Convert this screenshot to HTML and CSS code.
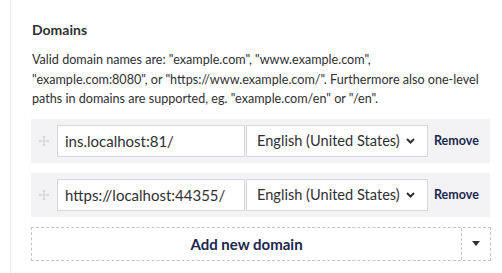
FILE: index.html
```html
<!DOCTYPE html>
<html lang="en">
<head>
  <meta charset="UTF-8">
  <meta name="viewport" content="width=device-width, initial-scale=1.0">
  <title>Domains</title>
  <link rel="stylesheet" href="styles.css">
</head>
<body>
  <div class="panel">
    <h3 class="panel-title">Domains</h3>
    <p class="panel-desc">Valid domain names are: "example.com", "www.example.com",<br>"example.com:8080", or "https://www.example.com/". Furthermore also one-level<br>paths in domains are supported, eg. "example.com/en" or "/en".</p>

    <div class="domain-list">
      <div class="domain-row">
        <span class="drag-handle">
          <svg width="12" height="12" viewBox="0 0 12 12"><path d="M6 0.5 L7.8 2.5 H6.6 V5.4 H9.5 V4.2 L11.5 6 L9.5 7.8 V6.6 H6.6 V9.5 H7.8 L6 11.5 L4.2 9.5 H5.4 V6.6 H2.5 V7.8 L0.5 6 L2.5 4.2 V5.4 H5.4 V2.5 H4.2 Z" fill="#d3d3d6"/></svg>
        </span>
        <input class="domain-input" type="text" value="ins.localhost:81/">
        <div class="lang-select">
          <span>English (United States)</span>
          <svg class="chevron" width="9" height="6" viewBox="0 0 9 6"><path d="M1 1 L4.5 4.5 L8 1" fill="none" stroke="#303033" stroke-width="2"/></svg>
        </div>
        <a class="remove-link" href="#">Remove</a>
      </div>

      <div class="domain-row">
        <span class="drag-handle">
          <svg width="12" height="12" viewBox="0 0 12 12"><path d="M6 0.5 L7.8 2.5 H6.6 V5.4 H9.5 V4.2 L11.5 6 L9.5 7.8 V6.6 H6.6 V9.5 H7.8 L6 11.5 L4.2 9.5 H5.4 V6.6 H2.5 V7.8 L0.5 6 L2.5 4.2 V5.4 H5.4 V2.5 H4.2 Z" fill="#d3d3d6"/></svg>
        </span>
        <input class="domain-input" type="text" value="https://localhost:44355/">
        <div class="lang-select">
          <span>English (United States)</span>
          <svg class="chevron" width="9" height="6" viewBox="0 0 9 6"><path d="M1 1 L4.5 4.5 L8 1" fill="none" stroke="#303033" stroke-width="2"/></svg>
        </div>
        <a class="remove-link" href="#">Remove</a>
      </div>
    </div>

    <div class="add-btn-group">
      <button class="add-btn">Add new domain</button>
      <button class="add-caret">
        <svg width="8" height="5" viewBox="0 0 8 5"><path d="M0 0 H8 L4 5 Z" fill="#303033"/></svg>
      </button>
    </div>
  </div>
</body>
</html>
```

FILE: styles.css
```css
body {
  margin: 0;
  padding: 0;
  background-color: #ffffff;
  font-family: Lato, "Open Sans", sans-serif;
  color: #303033;
}
.panel {
  margin-left: 10px;
  border-left: 1px solid #e9e9eb;
  padding: 20px 0 12px 20px;
  min-height: 241px;
}
.panel-title {
  margin: 0 0 0 1px;
  font-size: 14px;
  line-height: 20px;
  font-weight: 700;
  color: #303033;
}
.panel-desc {
  margin: 10px 0 10px 1px;
  font-size: 12.6px;
  line-height: 19.5px;
  color: #303033;
  white-space: nowrap;
}
.domain-list {
  display: flex;
  flex-direction: column;
  gap: 10px;
}
.domain-row {
  display: flex;
  align-items: center;
  width: 459px;
  height: 44px;
  box-sizing: border-box;
  background-color: #f3f3f5;
}
.drag-handle {
  width: 26px;
  display: flex;
  justify-content: center;
}
.domain-input {
  box-sizing: border-box;
  width: 188px;
  height: 32px;
  margin: 0;
  padding: 0 7px;
  border: 1px solid #d8d7d9;
  font-family: Lato, "Open Sans", sans-serif;
  font-size: 15px;
  color: #303033;
  background: #ffffff;
}
.lang-select {
  box-sizing: border-box;
  width: 182px;
  height: 32px;
  margin-left: 1px;
  padding: 0 12px 0 10px;
  border: 1px solid #d8d7d9;
  background: #ffffff;
  display: flex;
  align-items: center;
  justify-content: space-between;
  font-size: 14.6px;
}
.remove-link {
  margin-left: 6px;
  font-size: 12.5px;
  font-weight: 700;
  color: #1b264f;
  text-decoration: none;
}
.add-btn-group {
  display: flex;
  width: 460px;
  height: 34px;
  margin-top: 10px;
  box-sizing: border-box;
  border: 1px dashed #c4c4c7;
}
.add-btn {
  flex: 1;
  border: none;
  background: #ffffff;
  font-family: Lato, "Open Sans", sans-serif;
  font-size: 15px;
  font-weight: 700;
  color: #1b264f;
}
.add-caret {
  width: 29px;
  border: none;
  border-left: 1px dashed #c4c4c7;
  background: #ffffff;
  display: flex;
  align-items: center;
  justify-content: center;
}
```
